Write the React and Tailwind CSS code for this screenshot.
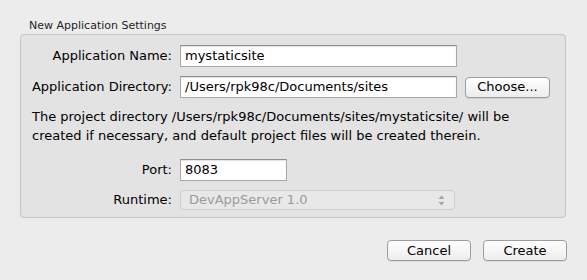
const FONT = { fontFamily: '"DejaVu Sans", "Liberation Sans", sans-serif' };

function Field({ value, className = "" }) {
  return (
    <div
      className={`h-[22px] border border-[#a9a9a9] border-t-[#8e8e8e] bg-white px-[4px] flex items-center text-[13px] text-black shadow-[inset_0_1px_1px_rgba(0,0,0,0.12)] ${className}`}
    >
      {value}
    </div>
  );
}

function Button({ children, className = "" }) {
  return (
    <button
      className={`h-[21px] rounded-[4px] border border-[#9d9d9d] bg-gradient-to-b from-white to-[#ededed] text-[13px] text-black shadow-[0_1px_0_rgba(0,0,0,0.08)] flex items-center justify-center ${className}`}
    >
      {children}
    </button>
  );
}

function Row({ label, children, className = "" }) {
  return (
    <div className={`flex items-center ${className}`}>
      <div className="w-[159px] text-right text-[13px] text-black pr-[8px]">
        {label}
      </div>
      {children}
    </div>
  );
}

export default function App() {
  return (
    <div className="w-[587px] h-[280px] bg-[#ececec] relative" style={FONT}>
      <div className="pl-[29px] pt-[19px] text-[11px] leading-[14px] text-[#1e1e1e]">
        New Application Settings
      </div>
      <div className="ml-[20px] mt-[1px] w-[546px] h-[184px] rounded-[4px] border border-[#c4c4c4] bg-[#e3e3e3] pt-[10px]">
        <Row label="Application Name:">
          <Field value="mystaticsite" className="w-[277px]" />
        </Row>
        <Row label="Application Directory:" className="mt-[9px]">
          <Field value="/Users/rpk98c/Documents/sites" className="w-[277px]" />
          <Button className="ml-[8px] w-[85px]">Choose...</Button>
        </Row>
        <div className="mt-[9px] pl-[11px] text-[13px] leading-[19px] text-black">
          The project directory /Users/rpk98c/Documents/sites/mystaticsite/ will be
          <br />
          created if necessary, and default project files will be created therein.
        </div>
        <Row label="Port:" className="mt-[14px]">
          <Field value="8083" className="w-[107px]" />
        </Row>
        <Row label="Runtime:" className="mt-[9px]">
          <div className="w-[275px] h-[20px] rounded-[4px] border border-[#cdcdcd] bg-[#e8e8e8] flex items-center justify-between pl-[8px] pr-[9px] text-[13px] text-[#9b9b9b]">
            <span>DevAppServer 1.0</span>
            <svg width="7" height="11" viewBox="0 0 7 11">
              <path d="M0.5 4 L3.5 0.5 L6.5 4 Z" fill="#a5a5a5" />
              <path d="M0.5 7 L3.5 10.5 L6.5 7 Z" fill="#a5a5a5" />
            </svg>
          </div>
        </Row>
      </div>
      <div className="flex justify-end gap-[12px] pr-[20px] mt-[22px]">
        <Button className="w-[84px]">Cancel</Button>
        <Button className="w-[84px]">Create</Button>
      </div>
    </div>
  );
}
